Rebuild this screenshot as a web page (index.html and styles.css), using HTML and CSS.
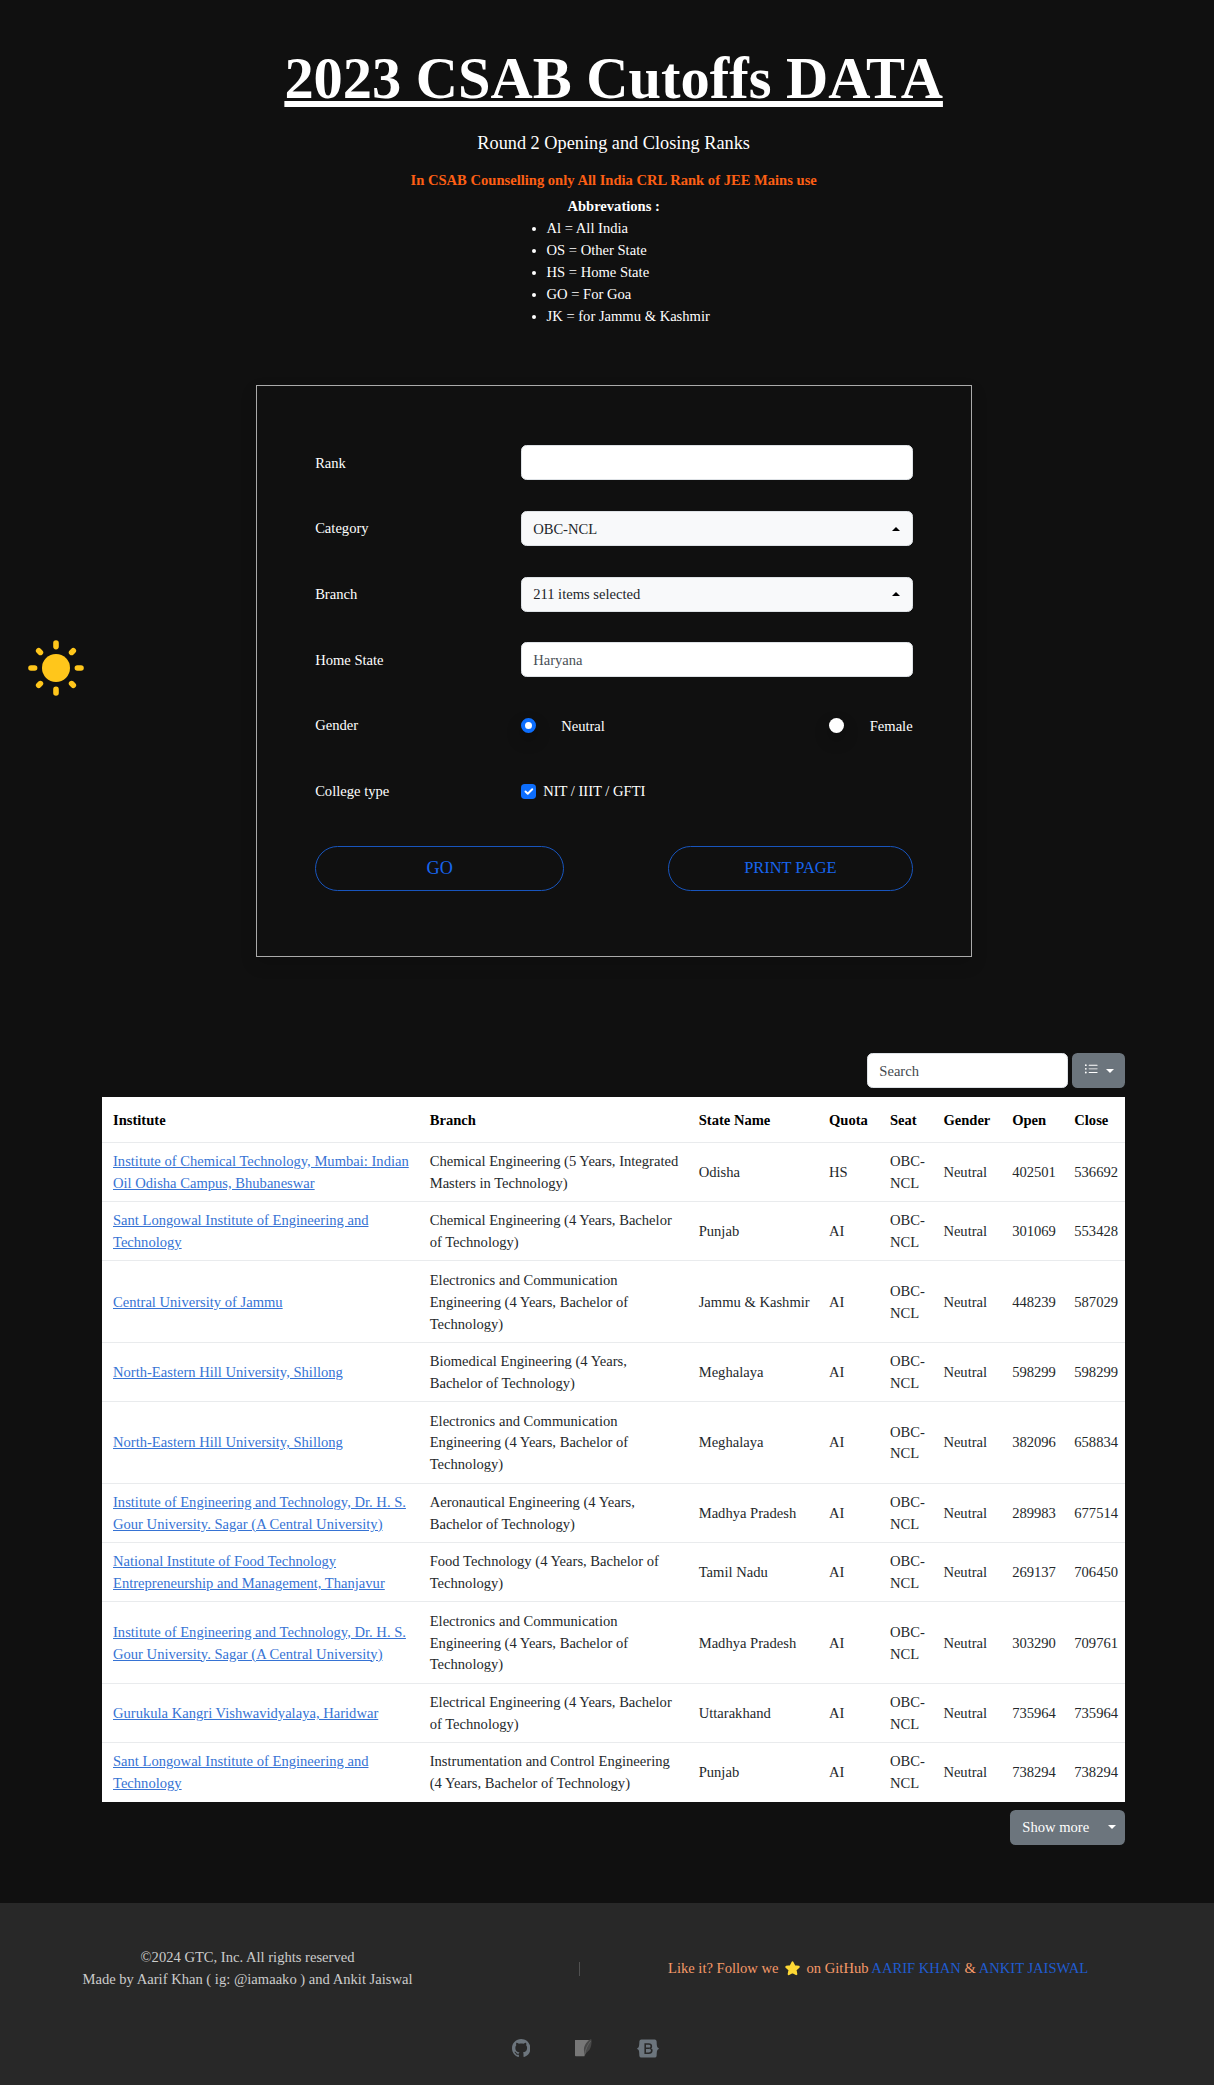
FILE: index.html
```html
<!DOCTYPE html>
<html lang="en">
<head>
<meta charset="utf-8">
<title>2023 CSAB Cutoffs DATA</title>
<link rel="stylesheet" href="styles.css">
</head>
<body>
<button class="theme" aria-label="Toggle theme">
<svg viewBox="-28 -28 56 56" width="56" height="56"><circle r="14" fill="#ffc61b"/><path d="M0-25v3.6M0 21.4V25M-25 0h3.6M21.4 0H25M-17.3-17.3l1.700 1.700M15.6 15.6l1.700 1.700M-17.3 17.3l1.700-1.700M15.6-15.6l1.700-1.700" stroke="#ffc61b" stroke-width="5.6" stroke-linecap="round"/></svg>
</button>
<main class="page">
<header class="intro">
<h1 class="title"><span>2023 CSAB Cutoffs DATA</span></h1>
<p class="subtitle">Round 2 Opening and Closing Ranks</p>
<p class="notice">In CSAB Counselling only All India CRL Rank of JEE Mains use</p>
<div class="abbr">
<b class="abbr-head">Abbrevations :</b>
<ul class="abbr-list">
<li>Al = All India</li>
<li>OS = Other State</li>
<li>HS = Home State</li>
<li>GO = For Goa</li>
<li>JK = for Jammu &amp; Kashmir</li>
</ul>
</div>
</header>

<form class="panel">
<div class="field"><label>Rank</label><div class="control"></div></div>
<div class="field"><label>Category</label><div class="control select">OBC-NCL<i class="caret up"></i></div></div>
<div class="field"><label>Branch</label><div class="control select">211 items selected<i class="caret up"></i></div></div>
<div class="field"><label>Home State</label><div class="control muted">Haryana</div></div>
<div class="field"><label>Gender</label><div class="radios">
<span class="choice"><i class="radio on"></i><span class="text">Neutral</span></span>
<span class="choice"><i class="radio"></i><span class="text">Female</span></span>
</div></div>
<div class="field"><label>College type</label><div class="check">
<svg class="box" viewBox="0 0 20 20"><rect width="20" height="20" rx="5" fill="#0d6efd"/><path d="M6 10l3 3 6-6" fill="none" stroke="#fff" stroke-width="2.6" stroke-linecap="round" stroke-linejoin="round"/></svg>
<span class="text">NIT / IIIT / GFTI</span></div></div>
<div class="actions"><button type="button" class="pill go">GO</button><button type="button" class="pill print">PRINT PAGE</button></div>
</form>

<div class="toolbar">
<div class="control search">Search</div>
<button class="grey cols"><svg viewBox="0 0 16 16" width="14.6" height="14.6" fill="#fff"><path fill-rule="evenodd" d="M5 11.5a.5.5 0 0 1 .5-.5h9a.5.5 0 0 1 0 1h-9a.5.5 0 0 1-.5-.5zm0-4a.5.5 0 0 1 .5-.5h9a.5.5 0 0 1 0 1h-9a.5.5 0 0 1-.5-.5zm0-4a.5.5 0 0 1 .5-.5h9a.5.5 0 0 1 0 1h-9a.5.5 0 0 1-.5-.5zm-3 1a1 1 0 1 0 0-2 1 1 0 0 0 0 2zm0 4a1 1 0 1 0 0-2 1 1 0 0 0 0 2zm0 4a1 1 0 1 0 0-2 1 1 0 0 0 0 2z"/></svg><i class="caret"></i></button>
</div>

<table class="ranks">
<colgroup><col class="c1"><col class="c2"><col class="c3"><col class="c4"><col class="c5"><col class="c6"><col class="c7"><col class="c8"></colgroup>
<thead><tr><th>Institute</th><th>Branch</th><th>State Name</th><th>Quota</th><th>Seat</th><th>Gender</th><th>Open</th><th>Close</th></tr></thead>
<tbody>
<tr><td><a>Institute of Chemical Technology, Mumbai: Indian<br>Oil Odisha Campus, Bhubaneswar</a></td><td>Chemical Engineering (5 Years, Integrated<br>Masters in Technology)</td><td>Odisha</td><td>HS</td><td>OBC-<br>NCL</td><td>Neutral</td><td>402501</td><td>536692</td></tr>
<tr><td><a>Sant Longowal Institute of Engineering and<br>Technology</a></td><td>Chemical Engineering (4 Years, Bachelor<br>of Technology)</td><td>Punjab</td><td>AI</td><td>OBC-<br>NCL</td><td>Neutral</td><td>301069</td><td>553428</td></tr>
<tr class="tall"><td><a>Central University of Jammu</a></td><td>Electronics and Communication<br>Engineering (4 Years, Bachelor of<br>Technology)</td><td>Jammu &amp; Kashmir</td><td>AI</td><td>OBC-<br>NCL</td><td>Neutral</td><td>448239</td><td>587029</td></tr>
<tr><td><a>North-Eastern Hill University, Shillong</a></td><td>Biomedical Engineering (4 Years,<br>Bachelor of Technology)</td><td>Meghalaya</td><td>AI</td><td>OBC-<br>NCL</td><td>Neutral</td><td>598299</td><td>598299</td></tr>
<tr class="tall"><td><a>North-Eastern Hill University, Shillong</a></td><td>Electronics and Communication<br>Engineering (4 Years, Bachelor of<br>Technology)</td><td>Meghalaya</td><td>AI</td><td>OBC-<br>NCL</td><td>Neutral</td><td>382096</td><td>658834</td></tr>
<tr><td><a>Institute of Engineering and Technology, Dr. H. S.<br>Gour University. Sagar (A Central University)</a></td><td>Aeronautical Engineering (4 Years,<br>Bachelor of Technology)</td><td>Madhya Pradesh</td><td>AI</td><td>OBC-<br>NCL</td><td>Neutral</td><td>289983</td><td>677514</td></tr>
<tr><td><a>National Institute of Food Technology<br>Entrepreneurship and Management, Thanjavur</a></td><td>Food Technology (4 Years, Bachelor of<br>Technology)</td><td>Tamil Nadu</td><td>AI</td><td>OBC-<br>NCL</td><td>Neutral</td><td>269137</td><td>706450</td></tr>
<tr class="tall"><td><a>Institute of Engineering and Technology, Dr. H. S.<br>Gour University. Sagar (A Central University)</a></td><td>Electronics and Communication<br>Engineering (4 Years, Bachelor of<br>Technology)</td><td>Madhya Pradesh</td><td>AI</td><td>OBC-<br>NCL</td><td>Neutral</td><td>303290</td><td>709761</td></tr>
<tr><td><a>Gurukula Kangri Vishwavidyalaya, Haridwar</a></td><td>Electrical Engineering (4 Years, Bachelor<br>of Technology)</td><td>Uttarakhand</td><td>AI</td><td>OBC-<br>NCL</td><td>Neutral</td><td>735964</td><td>735964</td></tr>
<tr><td><a>Sant Longowal Institute of Engineering and<br>Technology</a></td><td>Instrumentation and Control Engineering<br>(4 Years, Bachelor of Technology)</td><td>Punjab</td><td>AI</td><td>OBC-<br>NCL</td><td>Neutral</td><td>738294</td><td>738294</td></tr>
</tbody>
</table>
<div class="more"><button class="grey show"><span class="text">Show more</span><i class="caret"></i></button></div>
</main>

<footer class="footer">
<div class="credits">
<p class="copy">©2024 GTC, Inc. All rights reserved<br>Made by Aarif Khan ( ig: @iamaako ) and Ankit Jaiswal</p>
<i class="divider"></i>
<p class="like"><span>Like it? Follow we</span><svg class="star" viewBox="0 0 20 20" width="17" height="17"><path d="M10 2.8l2.3 4.600 5 .7-3.700 3.500.9 5-4.500-2.400-4.500 2.400.9-5-3.700-3.500 5-.7z" fill="#fdd835" stroke="#fdd835" stroke-width="2.400" stroke-linejoin="round"/></svg><span>on GitHub <a>AARIF KHAN</a> &amp; <a>ANKIT JAISWAL</a></span></p>
</div>
<div class="icons">
<svg viewBox="0 0 16 16" width="18.4" height="18.4" fill="#6c757d"><path d="M8 0C3.58 0 0 3.58 0 8c0 3.54 2.29 6.53 5.47 7.59.4.07.55-.17.55-.38 0-.19-.01-.82-.01-1.49-2.01.37-2.53-.49-2.69-.94-.09-.23-.48-.94-.82-1.13-.28-.15-.68-.52-.01-.53.63-.01 1.08.58 1.23.82.72 1.21 1.87.87 2.33.66.07-.52.28-.87.51-1.07-1.78-.2-3.64-.89-3.64-3.95 0-.87.31-1.59.82-2.15-.08-.2-.36-1.02.08-2.12 0 0 .67-.21 2.2.82.64-.18 1.32-.27 2-.27s1.36.09 2 .27c1.53-1.04 2.2-.82 2.2-.82.44 1.1.16 1.92.08 2.12.51.56.82 1.27.82 2.15 0 3.07-1.87 3.75-3.65 3.95.29.25.54.73.54 1.48 0 1.07-.01 1.93-.01 2.2 0 .21.15.46.55.38A8.01 8.01 0 0 0 16 8c0-4.42-3.58-8-8-8z"/></svg>
<svg viewBox="0 0 18 18" width="18" height="18"><path d="M0 1h14L9.500 17.200H.8Q0 17.200 0 16.500z" fill="#777"/><path d="M16.200 0C12 2 9.200 6 8.900 10.500L9.500 17.200C10.500 13 14 13 15.600 8.500 16.600 5.500 16.900 2 16.200 0z" fill="#484848"/><path d="M15.700 2C12.500 6 10.500 10 9.600 16" fill="none" stroke="#6b6b6b" stroke-width=".7"/></svg>
<svg viewBox="0 0 22 19" width="22" height="19"><path d="M4.300.5h13.400q1.700 0 1.900 1.700c.2 2.200.1 4.500.7 5.700q.4 1 1.500 1.300v.8q-1.100.3-1.500 1.300c-.6 1.200-.5 3.500-.7 5.700q-.2 1.500-1.900 1.500H4.300q-1.700 0-1.900-1.500c-.2-2.200-.1-4.500-.7-5.700Q1.300 10.300.2 10v-.8q1.100-.3 1.500-1.300c.6-1.200.5-3.500.7-5.700Q2.600.5 4.300.5z" fill="#6c757d"/><path d="M8.200 5h3.600c3.300 0 3.200 4 .7 4.300 3.400.5 3 4.900-.8 4.900H8.200zM8.200 9.300h4" fill="none" stroke="#282828" stroke-width="1.600"/></svg>
</div>
</footer>
</body>
</html>
```
FILE: styles.css
```css
* { box-sizing: border-box; }
body {
  margin: 0;
  background: #101010;
  color: #fff;
  font-family: "Liberation Serif", "Times New Roman", serif;
  font-size: 14.58px;
  line-height: 21.9px;
}
p, h1, ul { margin: 0; }
button { font: inherit; background: none; border: 0; padding: 0; }
.theme { position: fixed; left: 28.400px; top: 640.400px; height: 56px; }
.theme svg { display: block; }
.page { width: 1023.300px; margin-left: 102px; height: 1902.700px; padding-top: 44.300px; }
.intro { display: flex; flex-direction: column; align-items: center; height: 340.700px; white-space: nowrap; }
.title {
  font-size: 58.450px;
  line-height: 70px;
  text-decoration: underline;
  text-decoration-thickness: 6px;
  text-decoration-skip-ink: none;
  text-underline-offset: 3px;
}
.subtitle { font-size: 18.300px; line-height: 27.400px; margin-top: 15.900px; }
.notice { color: #fd5f14; font-weight: 700; margin-top: 12.500px; }
.abbr { margin-top: 4.100px; display: flex; flex-direction: column; align-items: center; }
.abbr-list { padding-left: 29.100px; }
.text { padding-top: 2px; }

.panel {
  width: 716px;
  height: 572px;
  margin: 0 auto;
  padding: 44px 58.500px 0;
  border: 1px solid #aaa;
  box-shadow: 0 7px 15px rgba(0, 0, 0, .15);
}
.field { display: grid; grid-template-columns: 205.500px 392px; align-items: center; height: 65.700px; }
.field label { padding-top: 1.500px; }
.control {
  height: 35px;
  border: 1px solid #dee2e6;
  border-radius: 5.500px;
  background: #fff;
  color: #212529;
  padding: 6.600px 11.500px 0;
}
.select { display: flex; justify-content: space-between; background: #f8f9fa; }
.muted { color: #495057; }
.caret {
  width: 8px;
  height: 0;
  border: 4px solid transparent;
  border-top-color: currentColor;
  border-bottom: 0;
}
.caret.up { border-top: 0; border-bottom: 4px solid #000; margin-top: 8px; }
.radios { display: flex; justify-content: space-between; }
.choice { display: flex; align-items: center; gap: 25.500px; }
.radio { width: 15px; height: 15px; border-radius: 50%; background: #fff; box-shadow: 0 7px 15px rgba(0, 0, 0, .3); }
.radio.on { border: 4.600px solid #0d6efd; }
.check { display: flex; align-items: center; gap: 7.500px; }
.box { width: 15px; height: 15px; }
.actions { display: flex; justify-content: space-between; width: 598px; margin-top: 21.800px; }
.pill { height: 45px; border: 1px solid #1855bd; border-radius: 23px; color: #1765ee; }
.go { width: 249px; font-size: 18.200px; padding-top: 2px; }
.print { width: 245.500px; font-size: 16.400px; }

.toolbar { display: flex; justify-content: flex-end; gap: 4.500px; margin-top: 96.500px; }
.search { width: 201px; color: #43484d; }
.grey { display: flex; align-items: center; background: #6c757d; color: #fff; border-radius: 5.500px; height: 35px; }
.cols { width: 53px; padding: 0 11.500px; justify-content: space-between; }
.cols svg { margin-top: -3px; }

.ranks {
  width: 1023.300px;
  margin-top: 8.700px;
  table-layout: fixed;
  border-collapse: separate;
  border-spacing: 0;
  background: #fff;
  color: #24282b;
  white-space: nowrap;
}
.ranks th, .ranks td { padding: 2px 0 0 11px; text-align: left; vertical-align: middle; }
.ranks th { height: 45.600px; color: #000; border-bottom: 1px solid #e9ebed; }
.ranks td { height: 59.300px; border-bottom: 1px solid #e9ebed; }
.ranks .tall td { height: 81.500px; }
.ranks tr:last-child td { border-bottom-color: #fff; }
.ranks a { color: #3673d4; text-decoration: underline; }
.c1 { width: 316.700px; }
.c2 { width: 269px; }
.c3 { width: 130.300px; }
.c4 { width: 61px; }
.c5 { width: 53.400px; }
.c6 { width: 68.800px; }
.c7 { width: 62.100px; }
.more { display: flex; justify-content: flex-end; margin-top: 7.200px; }
.show { width: 115px; padding: 0 9px 0 12px; justify-content: space-between; }

.footer { height: 182.300px; background: #282828; white-space: nowrap; }
.credits { display: grid; grid-template-columns: 495px 168px 1fr; align-items: center; padding-top: 44.700px; }
.copy { text-align: center; color: #ccc; }
.divider { justify-self: center; width: 1px; height: 14px; background: #505050; }
.like { display: flex; align-items: center; color: #f69a69; padding-left: 5px; }
.star { margin: -2px 5.500px 0; }
.like a { color: #205cd0; }
.icons { display: flex; gap: 44.500px; align-items: center; padding: 47.500px 0 0 511.700px; }
```
